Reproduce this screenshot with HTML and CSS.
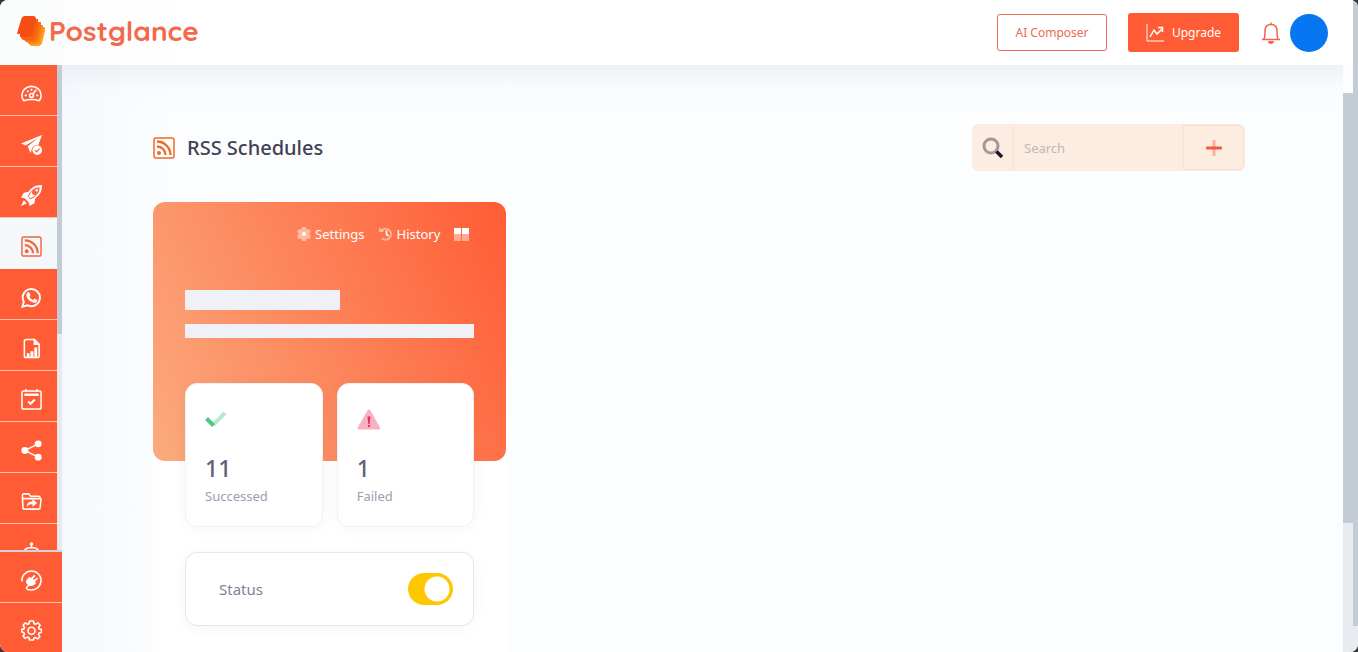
FILE: index.html
```html
<!DOCTYPE html>
<html lang="en">
<head>
    <meta charset="utf-8">
    <title>RSS Schedules</title>
    <link rel="stylesheet" href="styles.css">
</head>
<body>
<div class="window">
    <div class="screen">
        <header class="topbar">
            <a class="logo" href="#">
                <svg width="30" height="32" viewBox="0 0 30 32" aria-hidden="true">
                    <path fill="#ffa01c" d="M14 12h14v4l-3 12q-1 3-4 3h-7l-3-3z"/>
                    <path fill="#fb8a12" d="M11 10h15v5l-3 11q-1 3-4 3h-7l-3-3z"/>
                    <path fill="#fa7112" d="M9 7h15v6l-3 11q-1 3-4 3H9l-2-2z"/>
                    <path fill="#f85f10" d="M7 4h14v6l-3 12q-1 3-4 3H6l-2-2z"/>
                    <path fill="#f64d12" d="M8 1h8q3 0 3 3l-1 5-3 10q-1 3-4 3H3v-3H0l1-4L4 5q1-4 4-4z"/>
                </svg>
                <span>Postglance</span>
            </a>
            <nav class="topbar-actions">
                <button class="btn btn-outline">AI Composer</button>
                <button class="btn btn-primary">
                    <svg width="18" height="18" viewBox="0 0 18 18" fill="none" stroke="#fff" aria-hidden="true">
                        <path d="M1 0v17h17"/>
                        <path stroke-width="1.5" d="M4 13l4-7 3 4 6-6M12 3.500h4.500V8"/>
                    </svg>
                    Upgrade
                </button>
                <button class="icon-btn bell" aria-label="Notifications">
                    <svg width="20" height="22" viewBox="0 0 20 22" fill="none" stroke="#f2644a" stroke-width="1.5" aria-hidden="true">
                        <path d="M1 17.500h18M3 17c1-2 1-5 1-8 0-4 2-6.500 6-6.500S16 5 16 9c0 3 0 6 1 8M10 .5v2"/>
                        <path fill="#f2644a" stroke="none" d="M7 19h6q-.5 3-3 3t-3-3z"/>
                    </svg>
                </button>
                <button class="avatar" aria-label="Account"></button>
            </nav>
        </header>
        <div class="body">
            <aside class="sidebar">
                <div class="side-scroll">
                    <nav class="side-nav">
                        <a href="#" aria-label="Dashboard">
                            <svg viewBox="0 0 22 22" fill="none" stroke="#fff" stroke-width="1.7">
                                <path d="M3 18.500C.8 16.500.9 14 1 12.500a10 9 0 0 1 20 0c.1 1.500.2 4-2 6-5-1.500-11-1.500-16 0z"/>
                                <circle cx="11" cy="13" r="2"/>
                                <path d="M12 12l4-5M11 6v2M6.500 8l1.300 1.300M4 13h2M16 13h2"/>
                            </svg>
                        </a>
                        <a href="#" aria-label="Publish">
                            <svg viewBox="0 0 22 22" fill="#fff">
                                <path d="M0 10L22 1l-4 11q-6-1-7 5l-1 3-3-7L18 4 5 12z"/>
                                <circle cx="17" cy="17" r="5"/>
                                <path fill="none" stroke="#ff5c35" stroke-width="1.3" d="M14.800 17l1.700 1.700 3-3.400"/>
                            </svg>
                        </a>
                        <a href="#" aria-label="Boost">
                            <svg viewBox="0 0 22 22" fill="#fff">
                                <path fill-rule="evenodd" d="M22 0C14 0 11 3 8 7L3 8 0 13l4 1 4 4 1 4 5-3 1-5c5-4 7-7 7-14zM19.500 2.500c0 5-2.500 7.500-6 10.500L10 15l-3-3 2-3.500c3-4 5.500-6 10.500-6z"/>
                                <path fill-rule="evenodd" d="M8 12l3-5 6-3 1 1-3 6-5 3zM14 5.500a2.500 2.500 0 1 0 .1 0z"/>
                                <path d="M3 16l3 3-6 3z"/>
                            </svg>
                        </a>
                        <a href="#" class="active" aria-label="RSS Schedules">
                            <svg viewBox="0 0 22 22" fill="none" stroke="#f0643c">
                                <rect x="1" y="1" width="20" height="20" rx="2" stroke-width="1.5"/>
                                <path stroke-width="2.3" d="M4 4.500A13.500 13.500 0 0 1 17.500 18M4 9.500a8.500 8.500 0 0 1 8.500 8.500"/>
                                <circle cx="6" cy="16" r="2" fill="#f0643c" stroke="none"/>
                            </svg>
                        </a>
                        <a href="#" aria-label="WhatsApp">
                            <svg viewBox="0 0 22 22" fill="none" stroke="#fff" stroke-width="2">
                                <path d="M1.500 20.500L3 15.500A9 9 0 1 1 7 19.200z"/>
                                <path fill="#fff" stroke="none" d="M7 5.500h1.500l1.500 3-1 1.700q1 2.300 3.500 3.300l1.500-1.500 3 1.500q0 3-3 3Q7 15.500 5.500 9q0-2 1.500-3.500z"/>
                            </svg>
                        </a>
                        <a href="#" aria-label="Reports">
                            <svg viewBox="0 0 22 22" fill="none" stroke="#fff" stroke-width="1.6">
                                <path d="M5.500 1.500H14L19 6.500v12q0 2-2 2H5.500q-2 0-2-2v-15q0-2 2-2z"/>
                                <path fill="#fff" d="M14 2v4.500h4.500z"/>
                                <path stroke-width="3" d="M7.500 20v-4M11.500 20v-6M15.500 20V10"/>
                            </svg>
                        </a>
                        <a href="#" aria-label="Calendar">
                            <svg viewBox="0 0 22 22" fill="none" stroke="#fff" stroke-width="1.6">
                                <rect x="1" y="2" width="20" height="19" rx="2"/>
                                <path stroke-width="2.500" d="M3.500 6h15"/>
                                <path d="M5 0v3M17 0v3"/>
                                <path stroke-width="2" d="M7.500 13l2.500 2.500 4.500-4.500"/>
                            </svg>
                        </a>
                        <a href="#" aria-label="Share">
                            <svg viewBox="0 0 22 22" fill="#fff">
                                <path fill="none" stroke="#fff" stroke-width="1.6" d="M18 4L4 11l14 7"/>
                                <circle cx="18" cy="4" r="3.6"/>
                                <circle cx="4" cy="11" r="3.6"/>
                                <circle cx="18" cy="18" r="3.6"/>
                            </svg>
                        </a>
                        <a href="#" aria-label="Shared files">
                            <svg viewBox="0 0 22 22" fill="none" stroke="#fff" stroke-width="1.6">
                                <path d="M2 17L1.500 4.500q0-1.500 1.500-1.500h5l2 2.500h8.500q1.500 0 1.500 1.500v1M1.500 8H20q1 0 1 1l-1 8.500q0 1.500-1.500 1.500h-15Q2 19 2 17z"/>
                                <path fill="#fff" stroke="none" d="M12 8.500l5 4-5 4v-2.500q-4-.5-6 2.500 0-5.500 6-5.500z"/>
                            </svg>
                        </a>
                        <a href="#" aria-label="Bot">
                            <svg viewBox="0 0 22 22" fill="none" stroke="#fff" stroke-width="1.6">
                                <path d="M11 1v5M3 13q0-7 6-7h4q6 0 6 7v8H3zM0 11h3M19 11h3"/>
                                <circle cx="11" cy="2" r="1" fill="#fff"/>
                            </svg>
                        </a>
                    </nav>
                    <div class="side-track"><div class="side-thumb"></div></div>
                </div>
                <nav class="side-nav side-footer">
                    <a href="#" aria-label="Integrations">
                        <svg viewBox="0 0 22 22" fill="none" stroke="#fff" stroke-width="1.6">
                            <path d="M1 12A10 10 0 1 1 9 20.800q-4-.5-3-2.800l3-3"/>
                            <path fill="#fff" stroke="none" d="M6 10l2-2 1-1 1.500 1.500L14 5l1.200 1.200-2.700 3 1.300 1.300 3-2.700L18 9l-3.500 3.500L16 14l-2 1.500q-4 2.500-7 0T6 10z"/>
                        </svg>
                    </a>
                    <a href="#" aria-label="Settings">
                        <svg viewBox="0 0 22 22" fill="none" stroke="#fff" stroke-width="1.7" stroke-linejoin="round">
                            <path d="M9 1h4l.7 2.700 1.500.7L17.700 3l2.300 2.500L18.500 8l.6 1.500L21.500 10v3l-2.600.7-.6 1.400 1.400 2.400-2.300 2.300-2.400-1.400-1.400.6L13 21H9l-.7-2.500-1.500-.6-2.300 1.400-2.300-2.300 1.400-2.300-.6-1.500L.8 12.500V9.800L3 9.300l.6-1.500-1.400-2.300L4.500 3l2.300 1.400 1.500-.6z"/>
                            <circle cx="11" cy="11.300" r="3.700"/>
                        </svg>
                    </a>
                </nav>
            </aside>
            <main class="content">
                <div class="page-head">
                    <h1>
                        <svg width="22" height="22" viewBox="0 0 22 22" fill="none" stroke="#ec6a23" aria-hidden="true">
                            <rect x="1" y="1" width="20" height="20" rx="2" stroke-width="1.5"/>
                            <path stroke-width="2.3" d="M4 4.500A13.500 13.500 0 0 1 17.500 18M4 9.500a8.500 8.500 0 0 1 8.500 8.500"/>
                            <circle cx="6" cy="16" r="2" fill="#ec6a23" stroke="none"/>
                        </svg>
                        RSS Schedules
                    </h1>
                    <form class="search">
                        <label for="search" aria-label="Search">
                            <svg width="22" height="22" viewBox="0 0 22 22" fill="none" aria-hidden="true">
                                <circle cx="9" cy="9" r="7" stroke="#a29a98" stroke-width="3"/>
                                <path stroke="#16162c" stroke-width="3.5" d="M14.500 14.500l5.500 5.500"/>
                            </svg>
                        </label>
                        <input id="search" type="text" placeholder="Search">
                        <button type="button" aria-label="Add schedule">
                            <svg width="16" height="16" viewBox="0 0 16 16" aria-hidden="true">
                                <rect x="6.500" y="0" width="3" height="16" rx="1" fill="#ffae98"/>
                                <rect x="0" y="6.500" width="16" height="3" rx="1" fill="#f0593a"/>
                            </svg>
                        </button>
                    </form>
                </div>
                <div class="cards">
                    <section class="card">
                        <div class="hero">
                            <div class="hero-actions">
                                <a href="#">
                                    <svg width="14" height="14" viewBox="0 0 14 14" aria-hidden="true">
                                        <path fill="#fff" fill-opacity=".45" d="M5 0h4l.5 2 1 .6 2-.6 1.500 3-1.500 1.300v1.400L14 9l-1.500 3-2-.6-1 .6L9 14H5l-.5-2-1-.6-2 .6L0 9l1.500-1.300V6.300L0 5l1.500-3 2 .6 1-.6z"/>
                                        <circle cx="7" cy="7" r="2" fill="#fff"/>
                                    </svg>
                                    Settings
                                </a>
                                <a href="#">
                                    <svg width="14" height="14" viewBox="0 0 14 14" fill="none" aria-hidden="true">
                                        <path stroke="#fff" stroke-opacity=".45" stroke-width="2" d="M2.500 3.500A5.500 5.500 0 1 1 3 11.500"/>
                                        <path fill="#fff" fill-opacity=".45" d="M0 0l5 5H0z"/>
                                        <path stroke="#fff" stroke-width="1.6" d="M7.500 3.500v4l2 1.500"/>
                                    </svg>
                                    History
                                </a>
                                <button class="icon-btn" aria-label="Layout">
                                    <svg width="15" height="13" viewBox="0 0 15 13" fill="#fff" aria-hidden="true">
                                        <path d="M0 0h7v6H0zM8 0h7v6H8z"/>
                                        <path fill-opacity=".45" d="M0 6h7v7H0zM8 6h7v7H8z"/>
                                    </svg>
                                </button>
                            </div>
                            <div class="bar bar-title"></div>
                            <div class="bar bar-text"></div>
                        </div>
                        <div class="stats">
                            <div class="stat">
                                <svg width="24" height="24" viewBox="0 0 24 24" fill="none" stroke-width="4" aria-hidden="true">
                                    <path stroke="#b9e9cf" d="M8 17L20 5"/>
                                    <path stroke="#50c785" d="M1.500 10.500L8.500 17.500"/>
                                </svg>
                                <strong>11</strong>
                                <span>Successed</span>
                            </div>
                            <div class="stat">
                                <svg width="24" height="24" viewBox="0 0 24 24" aria-hidden="true">
                                    <path fill="#f9b0c3" d="M10.500 2.500q1.500-2 3 0l9.500 17q.8 2-1.500 2H2q-2 0-1.300-2z"/>
                                    <path fill="#dc3565" d="M10.500 8.500h3L12.700 16h-1.400zM11 17h2v2h-2z"/>
                                </svg>
                                <strong>1</strong>
                                <span>Failed</span>
                            </div>
                        </div>
                        <div class="status">
                            <label for="status">Status</label>
                            <input id="status" class="switch" type="checkbox" checked>
                        </div>
                    </section>
                </div>
            </main>
            <div class="main-track"><div class="main-thumb"></div></div>
        </div>
    </div>
    <div class="page-track"><div class="page-thumb"></div></div>
</div>
</body>
</html>
```
FILE: styles.css
```css
* {
    box-sizing: border-box;
}

body {
    margin: 0;
    background: #38383a;
    font-family: "Noto Sans", "Open Sans", sans-serif;
    font-size: 13px;
    color: #3f4254;
}

a {
    color: inherit;
    text-decoration: none;
}

button {
    font: inherit;
    cursor: pointer;
}

svg {
    display: block;
    flex: none;
}

.window {
    display: flex;
    height: 100vh;
    border-radius: 8px;
    overflow: hidden;
    background: #fcfdff;
}

.screen {
    flex: 1;
    display: flex;
    flex-direction: column;
    min-width: 0;
}

/* top bar */
.topbar {
    flex: none;
    display: flex;
    justify-content: space-between;
    align-items: center;
    height: 65px;
    padding: 0 25px 0 17px;
    background: linear-gradient(90deg, #fbfcfc, #fff 200px);
}

.logo {
    display: flex;
    align-items: center;
    gap: 2px;
    padding-bottom: 4px;
    font-family: Quicksand, Lato, sans-serif;
    font-size: 28px;
    font-weight: 700;
    line-height: 32px;
    color: #f2694b;
}

.topbar-actions {
    display: flex;
    align-items: center;
}

.btn {
    display: flex;
    align-items: center;
    justify-content: center;
    gap: 8px;
    border-radius: 3px;
    font-size: 12px;
}

.btn-outline {
    width: 110px;
    height: 37px;
    margin-right: 21px;
    border: 1px solid #ee6a50;
    background: #fff;
    color: #ee6a50;
}

.btn-primary {
    width: 111px;
    height: 39px;
    border: 0;
    background: #ff5c35;
    color: #fff;
}

.icon-btn {
    padding: 0;
    border: 0;
    background: none;
}

.bell {
    margin: 0 9px 0 22px;
}

.avatar {
    width: 38px;
    height: 38px;
    padding: 0;
    border: 0;
    border-radius: 50%;
    background: #0876f0;
}

.body {
    flex: 1;
    display: flex;
    min-height: 0;
}

/* sidebar */
.sidebar {
    flex: none;
    display: flex;
    flex-direction: column;
    width: 62px;
}

.side-scroll {
    flex: 1;
    display: flex;
    min-height: 0;
    overflow: hidden;
    border-bottom: 2px solid #d3d2da;
}

.side-nav {
    flex: 1;
}

.side-nav a {
    display: flex;
    align-items: center;
    height: 51px;
    padding: 6px 0 0 21px;
    border-bottom: 1px solid #ffc1b0;
    background: #ff5c35;
}

.side-nav svg {
    width: 21px;
    height: 21px;
}

.side-nav .active {
    background: #f4f8fb;
    border-bottom-color: #f4f8fb;
}

.side-footer {
    flex: none;
}

.side-footer a:last-child {
    height: 49px;
    border-bottom: 0;
}

.side-track {
    width: 5px;
    background: #e6eaf0;
}

.side-thumb {
    height: 269px;
    background: #c3cbd4;
}

/* content */
.content {
    flex: 1;
    min-width: 0;
    overflow: hidden;
    padding: 59px 98px 0 91px;
    background:
        linear-gradient(rgba(225, 228, 235, .5), rgba(240, 243, 248, .2) 22px, transparent 42px),
        linear-gradient(90deg, #f5f8fc, #fcfdff 110px);
}

.page-head {
    display: flex;
    justify-content: space-between;
    align-items: center;
    margin-bottom: 31px;
}

h1 {
    display: flex;
    align-items: center;
    gap: 12px;
    margin: 0;
    font-size: 20px;
    font-weight: 500;
    line-height: 28px;
}

.search {
    display: flex;
    width: 273px;
    height: 47px;
    border: 1px solid #f3eeeb;
    border-radius: 6px;
    overflow: hidden;
    background: #fdece0;
}

.search label {
    display: flex;
    align-items: center;
    justify-content: center;
    width: 41px;
    border-right: 1px solid #fbe0d0;
}

.search input {
    flex: 1;
    min-width: 0;
    padding: 0 10px;
    border: 0;
    outline: 0;
    background: none;
    font: inherit;
    color: #3f4254;
}

.search input::placeholder {
    color: #bfb8b6;
}

.search button {
    display: flex;
    align-items: center;
    justify-content: center;
    width: 61px;
    border: 1px solid #fbe0d0;
    border-radius: 0 6px 6px 0;
    background: none;
}

.cards {
    display: grid;
    grid-template-columns: repeat(3, 1fr);
    gap: 16px;
}

.card {
    padding-bottom: 60px;
    border-radius: 12px;
    background: #fff;
}

.hero {
    height: 259px;
    padding: 22px 32px 0;
    border-radius: 12px;
    background: linear-gradient(65deg, #fbab7e 0%, #ff5c35 100%);
}

.hero-actions {
    display: flex;
    justify-content: flex-end;
    align-items: center;
    gap: 14px;
    height: 20px;
    margin-bottom: 46px;
    padding-right: 5px;
    color: #fff;
}

.hero-actions a {
    display: flex;
    align-items: center;
    gap: 4px;
}

.bar {
    background: #eff1f7;
}

.bar-title {
    width: 155px;
    height: 20px;
    margin-bottom: 14px;
}

.bar-text {
    height: 14px;
}

.stats {
    display: grid;
    grid-template-columns: 1fr 1fr;
    gap: 14px;
    margin: -78px 32px 25px;
}

.stat {
    display: flex;
    flex-direction: column;
    height: 144px;
    padding: 24px 19px;
    border: 1px solid #f1f1f4;
    border-radius: 12px;
    background: #fff;
    box-shadow: 0 2px 16px rgba(0, 0, 0, .04);
    color: #9a9eb2;
}

.stat strong {
    margin-top: 18px;
    font-size: 23px;
    font-weight: 500;
    line-height: 36px;
    color: #5e6278;
}

.stat span {
    line-height: 20px;
}

.status {
    display: flex;
    justify-content: space-between;
    align-items: center;
    height: 74px;
    margin: 0 32px;
    padding: 0 20px 0 33px;
    border: 1px solid #e4e6ef;
    border-radius: 12px;
    background: #fff;
    box-shadow: 0 2px 16px rgba(0, 0, 0, .04);
    font-size: 15px;
    color: #7e8299;
}

.switch {
    appearance: none;
    width: 45px;
    height: 32px;
    margin: 0;
    border-radius: 16px;
    background: radial-gradient(circle at 29px 16px, #fff 12px, #ffc700 13px);
    cursor: pointer;
}

/* scroll bars */
.main-track {
    flex: none;
    width: 10px;
    margin-top: 28px;
    background: #e8ebf0;
}

.main-thumb {
    height: 77%;
    background: #c3cbd4;
}

.page-track {
    flex: none;
    width: 5px;
    background: #e8ebf0;
}

.page-thumb {
    height: 96%;
    background: #c3cbd4;
}
```
